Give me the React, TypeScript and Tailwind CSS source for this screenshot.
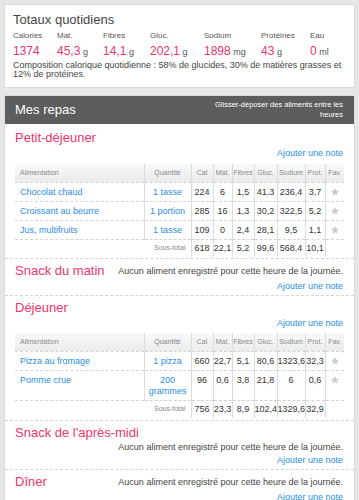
type FoodRow = { name: string; qty: string; v: string[] };

const totals = [
  { label: 'Calories', value: '1374', unit: '' },
  { label: 'Mat.', value: '45,3', unit: 'g' },
  { label: 'Fibres', value: '14,1', unit: 'g' },
  { label: 'Gluc.', value: '202,1', unit: 'g' },
  { label: 'Sodium', value: '1898', unit: 'mg' },
  { label: 'Protéines', value: '43', unit: 'g' },
  { label: 'Eau', value: '0', unit: 'ml' },
];

const breakfast: FoodRow[] = [
  { name: 'Chocolat chaud', qty: '1 tasse', v: ['224', '6', '1,5', '41,3', '236,4', '3,7'] },
  { name: 'Croissant au beurre', qty: '1 portion', v: ['285', '16', '1,3', '30,2', '322,5', '5,2'] },
  { name: 'Jus, multifruits', qty: '1 tasse', v: ['109', '0', '2,4', '28,1', '9,5', '1,1'] },
];
const breakfastTotal = ['618', '22,1', '5,2', '99,6', '568,4', '10,1'];

const lunch: FoodRow[] = [
  { name: 'Pizza au fromage', qty: '1 pizza', v: ['660', '22,7', '5,1', '80,6', '1323,6', '32,3'] },
  { name: 'Pomme crue', qty: '200 grammes', v: ['96', '0,6', '3,8', '21,8', '6', '0,6'] },
];
const lunchTotal = ['756', '23,3', '8,9', '102,4', '1329,6', '32,9'];

const headers = ['Cal', 'Mat.', 'Fibres', 'Gluc.', 'Sodium', 'Prot.', 'Fav.'];

const Star = () => (
  <svg viewBox="0 0 24 24" className="w-[10px] h-[10px] mx-auto" fill="#cccccc">
    <path d="M12 2.5l2.9 6.1 6.6.8-4.9 4.6 1.3 6.6L12 17.3l-5.9 3.3 1.3-6.6-4.9-4.6 6.6-.8z" />
  </svg>
);

const AddNote = () => (
  <div className="mt-[1px] text-right text-[9px] leading-[12px] text-[#2b8de4]">Ajouter une note</div>
);

const MealTable = ({ rows, total }: { rows: FoodRow[]; total: string[] }) => (
  <table className="w-[329px] table-fixed border-collapse">
    <colgroup>
      <col className="w-[129px]" />
      <col className="w-[47px]" />
      <col className="w-[22px]" />
      <col className="w-[19px]" />
      <col className="w-[22px]" />
      <col className="w-[23px]" />
      <col className="w-[28px]" />
      <col className="w-[20px]" />
      <col className="w-[19px]" />
    </colgroup>
    <thead>
      <tr className="h-[18px]">
        <th className="bg-linear-to-b from-[#f9f9f9] to-[#ebebeb] text-left pl-[5px] text-[7px] font-normal text-[#888]">
          Alimentation
        </th>
        <th className="bg-linear-to-b from-[#f9f9f9] to-[#ebebeb] border-l border-[#dcdcdc] text-center text-[7px] font-normal text-[#888]">
          Quantité
        </th>
        {headers.map((h) => (
          <th
            key={h}
            className="bg-linear-to-b from-[#f9f9f9] to-[#ebebeb] border-l border-[#dcdcdc] text-center text-[7px] font-normal text-[#888] whitespace-nowrap"
          >
            {h}
          </th>
        ))}
      </tr>
    </thead>
    <tbody>
      {rows.map((r) => (
        <tr key={r.name} className="border-t border-dashed border-[#d4d4d4] align-top">
          <td className="pl-[5px] pt-[4px] pb-[3px] text-[9px] leading-[11px] text-[#2b8de4]">{r.name}</td>
          <td className="border-l border-solid border-[#dcdcdc] pt-[4px] pb-[3px] text-center text-[9px] leading-[11px] text-[#2b8de4]">
            {r.qty}
          </td>
          {r.v.map((n, i) => (
            <td
              key={i}
              className="border-l border-solid border-[#dcdcdc] pt-[4px] text-center text-[9px] leading-[11px] text-[#333] whitespace-nowrap"
            >
              {n}
            </td>
          ))}
          <td className="border-l border-solid border-[#dcdcdc] pt-[4px]">
            <Star />
          </td>
        </tr>
      ))}
      <tr className="h-[18px] border-t border-dashed border-[#d4d4d4]">
        <td colSpan={2} className="text-right pr-[5px] text-[7px] text-[#888]">
          Sous-total
        </td>
        {total.map((n, i) => (
          <td
            key={i}
            className="border-l border-solid border-[#dcdcdc] text-center text-[9px] leading-[11px] text-[#333] whitespace-nowrap"
          >
            {n}
          </td>
        ))}
        <td className="border-l border-solid border-[#dcdcdc]" />
      </tr>
    </tbody>
  </table>
);

const EmptyMeal = ({ title }: { title: string }) => (
  <section className="border-t border-dashed border-[#d4d4d4] pt-[4px] pb-[3px] pl-[10px] pr-[11px]">
    <div className="flex flex-wrap items-center">
      <h3 className="text-[13px] leading-[16px] text-[#f0356c]">{title}</h3>
      <p className="ml-auto text-[9px] leading-[12px] text-[#444]">
        Aucun aliment enregistré pour cette heure de la journée.
      </p>
    </div>
    <AddNote />
  </section>
);

export default function App() {
  return (
    <div className="min-h-[500px] bg-[#e6e6e6] p-[4px] font-['Liberation_Sans',Arial,sans-serif] text-[#333]">
      {/* daily totals */}
      <div className="bg-white border border-[#dadada] pt-[7px] pb-[8px] pl-[8px] pr-[9px]">
        <h2 className="text-[13px] leading-[16px] text-[#444]">Totaux quotidiens</h2>
        <div className="grid grid-cols-[44px_46px_47px_54px_57px_49px_1fr] mt-[3px]">
          {totals.map((t) => (
            <div key={t.label}>
              <div className="text-[8px] leading-[10px] text-[#555]">{t.label}</div>
              <div className="mt-[3px] text-[12px] leading-[14px] text-[#f0356c] whitespace-nowrap">
                {t.value}
                {t.unit && <span className="text-[9px] text-[#555]"> {t.unit}</span>}
              </div>
            </div>
          ))}
        </div>
        <p className="mt-[2px] text-[9px] leading-[9px] text-[#444]">
          Composition calorique quotidienne : 58% de glucides, 30% de matières grasses et 12% de protéines.
        </p>
      </div>

      {/* meals */}
      <div className="mt-[7px] bg-white border border-[#dadada]">
        <div className="h-[28px] bg-[#5d5d5d] flex items-center justify-between pl-[10px] pr-[11px]">
          <span className="text-[13px] text-white">Mes repas</span>
          <span className="w-[134px] text-right text-[7.5px] leading-[10px] text-white">
            Glisser-déposer des aliments entre les heures
          </span>
        </div>

        <section className="pt-[6px] pb-[1px] pl-[10px] pr-[11px]">
          <h3 className="text-[13px] leading-[16px] text-[#f0356c]">Petit-déjeuner</h3>
          <AddNote />
          <div className="mt-[5px]">
            <MealTable rows={breakfast} total={breakfastTotal} />
          </div>
        </section>

        <EmptyMeal title="Snack du matin" />

        <section className="border-t border-dashed border-[#d4d4d4] pt-[4px] pb-[2px] pl-[10px] pr-[11px]">
          <h3 className="text-[13px] leading-[16px] text-[#f0356c]">Déjeuner</h3>
          <AddNote />
          <div className="mt-[4px]">
            <MealTable rows={lunch} total={lunchTotal} />
          </div>
        </section>

        <EmptyMeal title="Snack de l'après-midi" />
        <EmptyMeal title="Dîner" />
      </div>
    </div>
  );
}
